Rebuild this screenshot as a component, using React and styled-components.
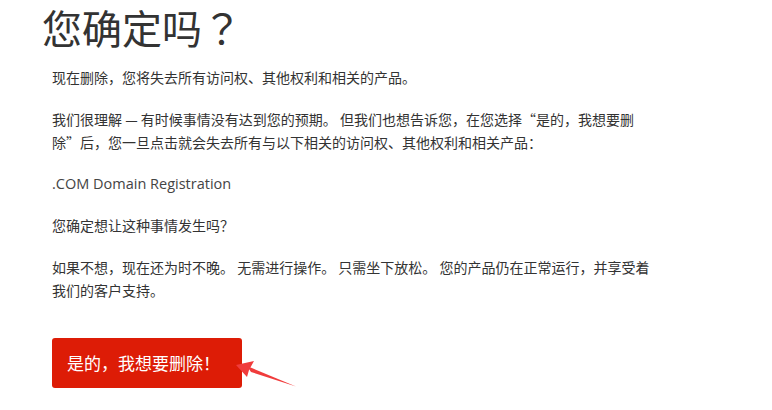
import React from "react";
import styled, { createGlobalStyle } from "styled-components";

const Global = createGlobalStyle`
  html, body { margin: 0; padding: 0; background: #fff; }
  body {
    font-family: "Noto Sans", "Noto Sans CJK SC", sans-serif;
    color: #333;
  }
`;

const Page = styled.div`
  width: 772px;
  height: 410px;
  padding: 3px 0 0 42px;
  box-sizing: border-box;
  overflow: hidden;
`;

const Title = styled.h1`
  margin: 0 0 15px;
  font-family: "Noto Sans CJK TC", "Noto Sans CJK SC", sans-serif;
  font-size: 40px;
  line-height: 48px;
  font-weight: 400;
  color: #333;
`;

const Body = styled.div`
  padding-left: 10px;
  width: 606px;
`;

const Para = styled.p`
  margin: 0 0 ${(props) => props.$gap || "19px"};
  font-family: "Noto Sans CJK SC", sans-serif;
  font-size: 14px;
  line-height: 23px;
  color: #333;
`;

const Product = styled.p`
  margin: 0 0 19px;
  font-family: "Open Sans", "Noto Sans CJK SC", sans-serif;
  font-size: 14.5px;
  line-height: 23px;
  color: #444;
`;

const Actions = styled.div`
  display: flex;
  align-items: flex-end;
  margin-top: 36px;
`;

const DeleteButton = styled.button`
  border: none;
  border-radius: 3px;
  background: #dd1c06;
  color: #fff;
  font-family: "Noto Sans CJK SC", sans-serif;
  font-size: 17px;
  line-height: 22px;
  padding: 14px 14px 14px 15px;
  width: 190px;
  text-align: left;
  cursor: pointer;
`;

const Arrow = styled.svg`
  margin-left: -8px;
  margin-bottom: -1px;
  flex: none;
`;

export default function App() {
  return (
    <>
      <Global />
      <Page>
        <Title>您确定吗？</Title>
        <Body>
          <Para>现在删除，您将失去所有访问权、其他权利和相关的产品。</Para>
          <Para $gap="18px">
            我们很理解 — 有时候事情没有达到您的预期。 但我们也想告诉您，在您选择“是的，我想要删除”后，您一旦点击就会失去所有与以下相关的访问权、其他权利和相关产品：
          </Para>
          <Product>.COM Domain Registration</Product>
          <Para>您确定想让这种事情发生吗？</Para>
          <Para>
            如果不想，现在还为时不晚。 无需进行操作。 只需坐下放松。 您的产品仍在正常运行，并享受着我们的客户支持。
          </Para>
          <Actions>
            <DeleteButton>是的，我想要删除！</DeleteButton>
            <Arrow width="64" height="30" viewBox="0 0 64 30">
              <polygon points="13,7 17,13 62,27.5" fill="#f03c3c" />
              <polygon points="2,6 20,2 15,11 13,18" fill="#f03c3c" />
            </Arrow>
          </Actions>
        </Body>
      </Page>
    </>
  );
}
